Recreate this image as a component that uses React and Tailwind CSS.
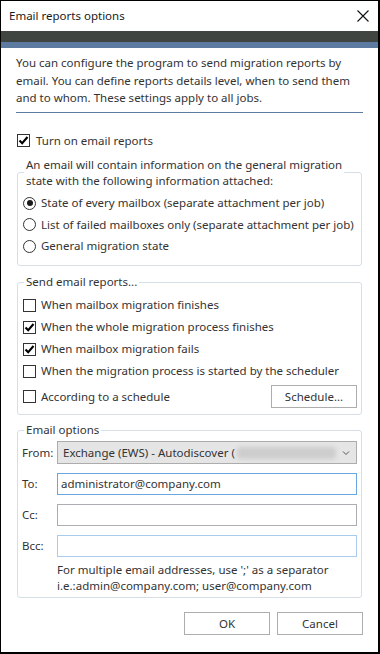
import React from "react";

function Check({ checked }) {
  return (
    <span className="w-[13px] h-[13px] border border-[#333] bg-white flex items-center justify-center shrink-0">
      {checked && (
        <svg width="11" height="11" viewBox="0 0 11 11">
          <path d="M1.5 5.5 L4.2 8.3 L9.5 2" fill="none" stroke="#000" strokeWidth="2.1" />
        </svg>
      )}
    </span>
  );
}

function Radio({ checked }) {
  return (
    <span className="w-[13px] h-[13px] rounded-full border border-[#333] bg-white flex items-center justify-center shrink-0">
      {checked && <span className="w-[6px] h-[6px] rounded-full bg-[#1a1a1a]" />}
    </span>
  );
}

function CheckRow({ checked, children }) {
  return (
    <div className="h-[22px] flex items-center gap-[5px]">
      <Check checked={checked} />
      <span className="whitespace-nowrap">{children}</span>
    </div>
  );
}

function RadioRow({ checked, children }) {
  return (
    <div className="h-[21.5px] flex items-center gap-[5px]">
      <Radio checked={checked} />
      <span className="whitespace-nowrap">{children}</span>
    </div>
  );
}

function Field({ label, border, children }) {
  return (
    <div className="flex items-center">
      <span className="w-[35px] shrink-0">{label}</span>
      <div className={"flex-1 h-[22px] border bg-white flex items-center px-[3px] " + border}>{children}</div>
    </div>
  );
}

export default function App() {
  return (
    <div
      className="w-[380px] h-[654px] bg-white border-l border-t border-r-2 border-b-2 border-black text-[11.5px] leading-[16px] text-[#333] flex flex-col"
      style={{ fontFamily: '"Noto Sans", "Open Sans", sans-serif' }}
    >
      <div className="h-[30px] flex items-center justify-between pl-[8px] pr-[9px] shrink-0">
        <span className="text-[11.5px] text-[#1a1a1a]">Email reports options</span>
        <svg width="12" height="12" viewBox="0 0 12 12">
          <path d="M0.5 0.5 L11.5 11.5 M11.5 0.5 L0.5 11.5" stroke="#111" strokeWidth="1.1" />
        </svg>
      </div>
      <div className="h-[11px] bg-[#414541] shrink-0" />
      <div className="h-[6px] bg-[#5d7ba0] shrink-0" />

      <div className="px-[15px] flex flex-col">
        <p className="mt-[6px] leading-[17.5px] whitespace-nowrap">
          You can configure the program to send migration reports by
          <br />
          email. You can define reports details level, when to send them
          <br />
          and to whom. These settings apply to all jobs.
        </p>
        <div className="mt-[5px] h-px bg-[#5d7ba0]" />

        <div className="mt-[20px] ml-[1px] flex items-center gap-[6px]">
          <Check checked />
          <span>Turn on email reports</span>
        </div>

        <fieldset className="mt-[8px] mx-[1px] border border-[#d5dfe5] rounded-[3px] pl-[5px] pr-[4px] pb-[8px]">
          <legend className="ml-[1px] px-[2px] whitespace-nowrap">
            An email will contain information on the general migration
            <br />
            state with the following information attached:
          </legend>
          <div className="mt-[4px] flex flex-col">
            <RadioRow checked>State of every mailbox (separate attachment per job)</RadioRow>
            <RadioRow>List of failed mailboxes only (separate attachment per job)</RadioRow>
            <RadioRow>General migration state</RadioRow>
          </div>
        </fieldset>

        <fieldset className="mt-[8px] mx-[1px] border border-[#d5dfe5] rounded-[3px] pl-[5px] pr-[4px] pb-[6px]">
          <legend className="ml-[1px] px-[2px]">Send email reports...</legend>
          <div className="mt-[4px] flex flex-col">
            <CheckRow>When mailbox migration finishes</CheckRow>
            <CheckRow checked>When the whole migration process finishes</CheckRow>
            <CheckRow checked>When mailbox migration fails</CheckRow>
            <CheckRow>When the migration process is started by the scheduler</CheckRow>
            <div className="mt-[3px] flex items-center justify-between">
              <div className="flex items-center gap-[5px]">
                <Check />
                <span>According to a schedule</span>
              </div>
              <button className="w-[86px] h-[23px] border border-[#adadad] bg-white text-[#333]">
                Schedule...
              </button>
            </div>
          </div>
        </fieldset>

        <fieldset className="mt-[7px] mx-[1px] border border-[#d5dfe5] rounded-[3px] pl-[4px] pr-[4px] pb-[3px]">
          <legend className="ml-[2px] px-[2px]">Email options</legend>
          <div className="mt-[3px] flex flex-col gap-[9px]">
            <div className="flex items-center">
              <span className="w-[35px] shrink-0">From:</span>
              <div className="flex-1 h-[23px] border border-[#acacac] bg-[#e5e5e5] flex items-center pl-[5px] pr-[6px]">
                <span className="whitespace-nowrap">Exchange (EWS) - Autodiscover (</span>
                <span className="flex-1 h-[12px] mx-[2px] bg-[#cdcdcd] rounded-[4px] blur-[2px]" />
                <svg width="8" height="6" viewBox="0 0 8 6" className="ml-[4px]">
                  <path d="M1 1.5 L4 4.5 L7 1.5" fill="none" stroke="#555" strokeWidth="1" />
                </svg>
              </div>
            </div>
            <Field label="To:" border="border-[#6aa6e0]">
              administrator@company.com
            </Field>
            <Field label="Cc:" border="border-[#abadb3]" />
            <Field label="Bcc:" border="border-[#a9cbee]" />
          </div>
          <p className="mt-[5px] ml-[35px] whitespace-nowrap">
            For multiple email addresses, use ';' as a separator
            <br />
            i.e.:admin@company.com; user@company.com
          </p>
        </fieldset>

        <div className="mt-[14px] flex justify-end gap-[7px]">
          <button className="w-[86px] h-[23px] border border-[#adadad] bg-white text-[#333]">OK</button>
          <button className="w-[86px] h-[23px] border border-[#adadad] bg-white text-[#333]">Cancel</button>
        </div>
      </div>
    </div>
  );
}
